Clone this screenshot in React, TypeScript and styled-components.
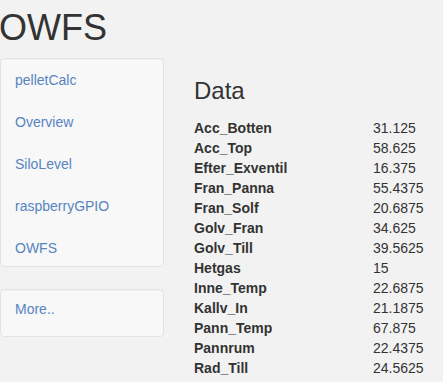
import styled, { createGlobalStyle } from "styled-components"

const Global = createGlobalStyle`
body {
  margin: 0;
  background: #f2f2f2;
  font-family: "Liberation Sans", Arial, sans-serif;
  font-size: 14px;
  color: #333;
}
`

const Page = styled.div`
padding-top: 8px;
`

const Titulo = styled.h1`
margin: 0 0 10px;
font-size: 36px;
line-height: 40px;
font-weight: 400;
text-indent: -1px;
color: #333;
`

const Linha = styled.div`
display: flex;
gap: 30px;
align-items: flex-start;
`

const Lateral = styled.div`
width: 164px;
display: flex;
flex-direction: column;
gap: 22px;
`

const Poco = styled.ul<{ $pad?: string }>`
list-style: none;
margin: 0;
padding: ${p => p.$pad || "0"};
background: #f8f8f9;
border: 1px solid #e3e3e3;
border-radius: 4px;
box-shadow: inset 0 1px 1px rgba(0, 0, 0, 0.03);
`

const Item = styled.li`
padding: 10px 14px;
line-height: 22px;
&:last-child {
  padding-bottom: 7px;
}
`

const Link = styled.a`
color: #5784bf;
text-decoration: none;
font-size: 14px;
`

const Principal = styled.div`
flex: 1;
`

const Subtitulo = styled.h3`
margin: 20px 0 14px;
font-size: 24px;
line-height: 26px;
font-weight: 400;
color: #333;
`

const Tabela = styled.table`
border-collapse: collapse;
font-size: 14px;
`

const Nome = styled.td`
font-weight: 700;
width: 179px;
padding: 0;
line-height: 20px;
`

const Valor = styled.td`
padding: 0;
line-height: 20px;
`

const dados: [string, string][] = [
  ["Acc_Botten", "31.125"],
  ["Acc_Top", "58.625"],
  ["Efter_Exventil", "16.375"],
  ["Fran_Panna", "55.4375"],
  ["Fran_Solf", "20.6875"],
  ["Golv_Fran", "34.625"],
  ["Golv_Till", "39.5625"],
  ["Hetgas", "15"],
  ["Inne_Temp", "22.6875"],
  ["Kallv_In", "21.1875"],
  ["Pann_Temp", "67.875"],
  ["Pannrum", "22.4375"],
  ["Rad_Till", "24.5625"],
]

const links = ["pelletCalc", "Overview", "SiloLevel", "raspberryGPIO", "OWFS"]

export default function App() {
  return (
    <Page>
      <Global />
      <Titulo>OWFS</Titulo>
      <Linha>
        <Lateral>
          <Poco>
            {links.map(l => (
              <Item key={l}><Link href="#">{l}</Link></Item>
            ))}
          </Poco>
          <Poco $pad="9px 14px 17px">
            <li style={{ lineHeight: "20px" }}><Link href="#">More..</Link></li>
          </Poco>
        </Lateral>
        <Principal>
          <Subtitulo>Data</Subtitulo>
          <Tabela>
            <tbody>
              {dados.map(([n, v]) => (
                <tr key={n}>
                  <Nome>{n}</Nome>
                  <Valor>{v}</Valor>
                </tr>
              ))}
            </tbody>
          </Tabela>
        </Principal>
      </Linha>
    </Page>
  )
}
